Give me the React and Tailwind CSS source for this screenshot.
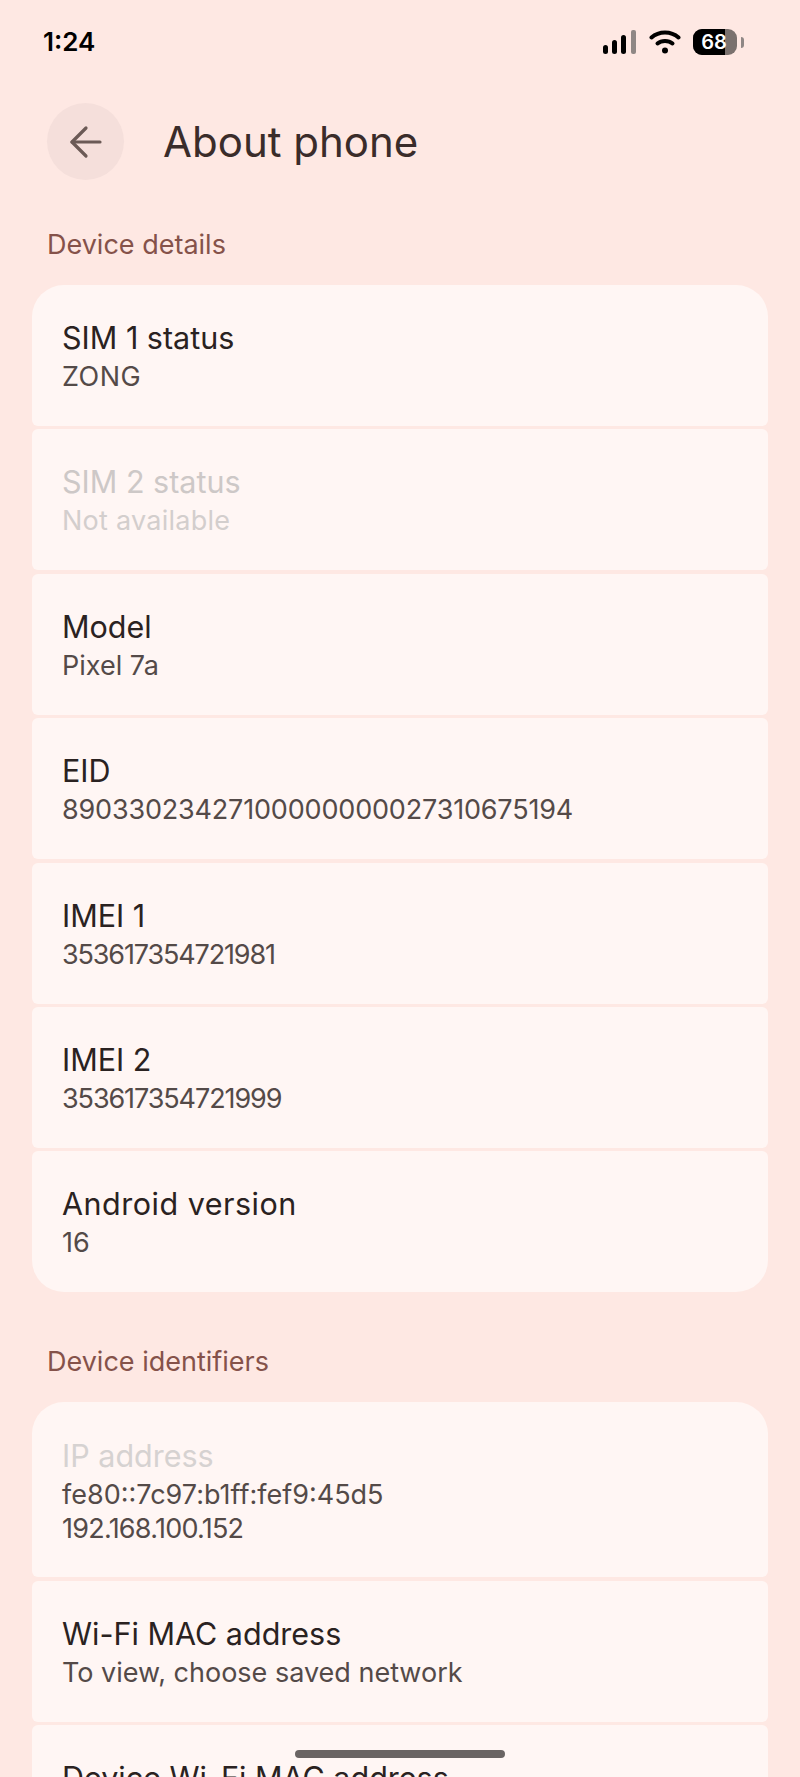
import React from 'react';
import { ArrowLeft } from 'lucide-react';

const font = "font-['Inter',sans-serif]";

function Row({ title, lines, disabled, first, last, titleClass = '', lineClass = '' }) {
  const round = first ? 'rounded-t-[32px] rounded-b-[6px]' : last ? 'rounded-b-[32px] rounded-t-[6px]' : 'rounded-[6px]';
  return (
    <div className={`bg-[#fff6f4] h-[141px] px-[30px] pt-[32px] ${round}`}>
      <div className={`text-[30.5px] leading-[42px] ${disabled ? 'text-[#cdc8c7]' : 'text-[#2a2221]'} ${titleClass}`}>{title}</div>
      {lines && lines.map((l) => (
        <div key={l} className={`text-[27px] leading-[36px] ${disabled ? 'text-[#d3cecd]' : 'text-[#544a48]'} ${lineClass}`}>{l}</div>
      ))}
    </div>
  );
}

function StatusIcons() {
  return (
    <div className="flex items-center gap-[12px]">
      <svg width="34" height="24" viewBox="0 0 34 24">
        <rect x="0" y="15" width="5" height="9" rx="2.5" fill="#000" />
        <rect x="9" y="10" width="5" height="14" rx="2.5" fill="#000" />
        <rect x="18" y="5" width="5" height="19" rx="2.5" fill="#000" />
        <rect x="28" y="0" width="5" height="24" rx="2" fill="#8f8785" />
      </svg>
      <svg width="32" height="24" viewBox="0 0 32 24" fill="none" stroke="#000" strokeWidth="4" strokeLinecap="round">
        <path d="M2.5 7.5C10 .8 22 .8 29.5 7.5" />
        <path d="M8.5 13.5C12.5 10 19.5 10 23.5 13.5" />
        <circle cx="16" cy="20.5" r="3" fill="#000" stroke="none" />
      </svg>
      <div className="flex items-center gap-[4px]">
        <div className="relative w-[44px] h-[26px] rounded-[9px] overflow-hidden bg-[#7a716e]">
          <div className="absolute left-0 top-0 bottom-0 w-[32px] bg-black" />
          <div className="absolute inset-0 flex items-center justify-center text-white text-[20px] font-semibold pr-[6px] pl-[4px]">68</div>
        </div>
        <div className="w-[3px] h-[11px] rounded-r-full bg-[#8f8785]" />
      </div>
    </div>
  );
}

export default function App() {
  return (
    <div className={`relative h-[1777px] w-[800px] overflow-hidden bg-[#fee8e3] ${font}`}>
      {/* status bar */}
      <div className="flex items-center justify-between pl-[43px] pr-[56px] pt-[14px] h-[70px]">
        <span className="text-[26px] font-semibold text-black leading-none">1:24</span>
        <StatusIcons />
      </div>

      {/* header */}
      <div className="flex items-center pl-[47px] mt-[33px]">
        <div className="w-[77px] h-[77px] rounded-full bg-[#f5dfdb] flex items-center justify-center">
          <ArrowLeft size={48} strokeWidth={1.6} color="#6b5a56" />
        </div>
        <h1 className="ml-[39px] text-[42px] leading-[50px] text-[#3a2c2a]">About phone</h1>
      </div>

      <div className="pl-[47px] mt-[47px] text-[27px] leading-[36px] text-[#85524a]">Device details</div>

      <div className="mx-[32px] mt-[22px] flex flex-col gap-[3.4px]">
        <Row first title="SIM 1 status" lines={['ZONG']} lineClass="tracking-[0.5px]" />
        <Row disabled title="SIM 2 status" lines={['Not available']} lineClass="tracking-[0.25px]" />
        <Row title="Model" lines={['Pixel 7a']} />
        <Row title="EID" lines={['89033023427100000000027310675194']} lineClass="tracking-[-0.18px]" />
        <Row title="IMEI 1" lines={['353617354721981']} lineClass="tracking-[-1.15px]" />
        <Row title="IMEI 2" lines={['353617354721999']} lineClass="tracking-[-1.1px]" />
        <Row last title="Android version" lines={['16']} titleClass="tracking-[0.5px]" />
      </div>

      <div className="pl-[47px] mt-[52px] text-[27px] leading-[36px] text-[#85524a]">Device identifiers</div>

      <div className="mx-[32px] mt-[22px] flex flex-col gap-[3.4px]">
        <div className="bg-[#fff6f4] h-[175px] px-[30px] pt-[31px] rounded-t-[32px] rounded-b-[6px]">
          <div className="text-[30.5px] leading-[45px] text-[#d6d2d1]">IP address</div>
          <div className="text-[27px] leading-[34px] text-[#544a48]">fe80::7c97:b1ff:fef9:45d5</div>
          <div className="text-[27px] leading-[34px] text-[#544a48] tracking-[-0.75px]">192.168.100.152</div>
        </div>
        <Row title="Wi-Fi MAC address" lines={['To view, choose saved network']} />
        <Row title="Device Wi-Fi MAC address" lines={[]} />
      </div>

      {/* gesture pill */}
      <div className="absolute left-[295px] top-[1750px] w-[210px] h-[8px] rounded-full bg-[#6a6463]" />
    </div>
  );
}
